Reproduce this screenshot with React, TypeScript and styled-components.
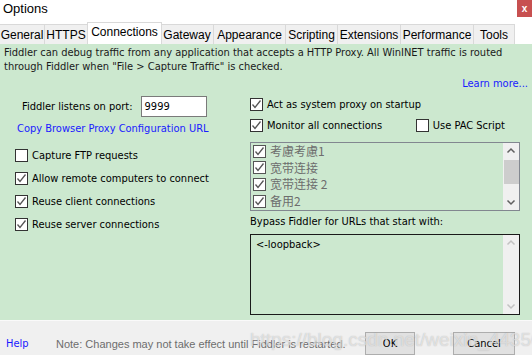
import styled, { createGlobalStyle } from 'styled-components'

const GlobalStyle = createGlobalStyle`
  html, body {
    margin: 0;
    padding: 0;
    background: #ffffff;
  }
  body {
    font-family: 'DejaVu Sans Condensed', 'Liberation Sans', sans-serif;
    font-size: 11px;
    color: #000;
  }
`

const GREEN = '#cce8cf'

const Window = styled.div`
  position: relative;
  width: 532px;
  height: 355px;
  display: flex;
  flex-direction: column;
  overflow: hidden;
`

const TitleBar = styled.div`
  height: 22px;
  display: flex;
  justify-content: space-between;
  align-items: flex-start;
  background: #ffffff;
`

const Title = styled.span`
  font-family: 'Liberation Sans', sans-serif;
  font-size: 13px;
  padding: 1px 0 0 3px;
`

const CloseButton = styled.div`
  width: 15px;
  height: 17px;
  background: #c75050;
  color: #fff;
  font-family: 'Liberation Sans', sans-serif;
  font-weight: bold;
  font-size: 10px;
  display: flex;
  align-items: center;
  justify-content: center;
`

const TabStrip = styled.div`
  height: 22px;
  display: flex;
  align-items: flex-end;
  background: #ffffff;
`

const Tab = styled.div<{ active?: boolean; w: number }>`
  width: ${(p) => p.w}px;
  box-sizing: border-box;
  height: ${(p) => (p.active ? 22 : 20)}px;
  margin-left: ${(p) => (p.active ? -1 : 0)}px;
  margin-right: ${(p) => (p.active ? -1 : 0)}px;
  position: relative;
  z-index: ${(p) => (p.active ? 1 : 0)};
  background: ${(p) => (p.active ? '#ffffff' : '#f0f0f0')};
  border: 1px solid #d9d9d9;
  border-bottom: none;
  border-left: ${(p) => (p.active ? '1px solid #d9d9d9' : 'none')};
  display: flex;
  align-items: center;
  justify-content: center;
  font-family: 'Liberation Sans', sans-serif;
  font-size: 12px;
  padding-bottom: ${(p) => (p.active ? 3 : 0)}px;
`

const Content = styled.div`
  flex: 1;
  background: ${GREEN};
  display: flex;
  flex-direction: column;
  padding: 2px 4px 0 4px;
`

const Description = styled.p`
  margin: 0;
  line-height: 14px;
  color: #1a1a1a;
`

const LearnMore = styled.a`
  align-self: flex-end;
  color: #1a1aff;
  margin: 3px 0 0 0;
  line-height: 14px;
  text-decoration: none;
`

const Columns = styled.div`
  display: grid;
  grid-template-columns: 246px 270px;
  margin-top: 4px;
`

const Column = styled.div`
  display: flex;
  flex-direction: column;
`

const PortRow = styled.div`
  display: flex;
  align-items: center;
  gap: 8px;
  padding-left: 18px;
  margin-top: 1px;
`

const PortInput = styled.div`
  width: 66px;
  height: 21px;
  box-sizing: border-box;
  border: 1px solid #7a7a7a;
  background: #fff;
  padding: 3px 3px;
`

const LinkText = styled.a`
  color: #1a1aff;
  text-decoration: none;
  padding-left: 13px;
  margin-top: 5px;
  line-height: 14px;
`

const CheckRow = styled.label<{ top: number; indent?: number }>`
  display: flex;
  align-items: center;
  gap: 4px;
  height: 17px;
  margin-top: ${(p) => p.top}px;
  padding-left: ${(p) => p.indent ?? 0}px;
`

const Box = styled.span<{ muted?: boolean }>`
  width: 13px;
  height: 13px;
  box-sizing: border-box;
  border: 1px solid ${(p) => (p.muted ? '#555' : '#333')};
  background: #fff;
  display: inline-flex;
  align-items: center;
  justify-content: center;
  flex-shrink: 0;
`

const Check = ({ checked, muted }: { checked?: boolean; muted?: boolean }) => (
  <Box muted={muted}>
    {checked && (
      <svg width="11" height="11" viewBox="0 0 11 11">
        <path d="M1.5 5.5 L4 8.5 L9.5 1.5" fill="none" stroke="#555" strokeWidth="1.3" />
      </svg>
    )}
  </Box>
)

const SplitRow = styled.div`
  display: flex;
  align-items: center;
  justify-content: space-between;
  padding-right: 15px;
  margin-top: 4px;
`

const ListBox = styled.div`
  margin-top: 8px;
  height: 69px;
  box-sizing: border-box;
  border: 1px solid #828790;
  display: flex;
`

const ListItems = styled.div`
  flex: 1;
  padding: 0 0 0 2px;
  display: flex;
  flex-direction: column;
  overflow: hidden;
`

const ListItem = styled.div`
  display: flex;
  align-items: center;
  gap: 4px;
  height: 16.6px;
  line-height: 16px;
  flex-shrink: 0;
  color: #6d6d6d;
  font-family: 'Noto Sans CJK SC', 'Liberation Sans', sans-serif;
  font-size: 12px;
`

const ScrollBar = styled.div<{ dim?: boolean }>`
  width: 16px;
  background: #f0f0f0;
  display: flex;
  flex-direction: column;
  align-items: center;
  color: ${(p) => (p.dim ? '#c2c2c2' : '#606060')};
`

const Track = styled.div`
  flex: 1;
  width: 100%;
`

const Thumb = styled.div`
  width: 15px;
  height: 24px;
  margin-top: 1px;
  background: #cdcdcd;
`

const Arrow = ({ down }: { down?: boolean }) => (
  <svg width="16" height="16" viewBox="0 0 16 16" style={{ flexShrink: 0 }}>
    <path
      d={down ? 'M4.5 6.5 L8 10 L11.5 6.5' : 'M4.5 9.5 L8 6 L11.5 9.5'}
      fill="none"
      stroke="currentColor"
      strokeWidth="1.5"
    />
  </svg>
)

const BypassLabel = styled.div`
  margin-top: 4px;
  line-height: 14px;
`

const TextArea = styled.div`
  margin-top: 5px;
  height: 81px;
  box-sizing: border-box;
  border: 1px solid #1a1a1a;
  display: flex;
`

const TextAreaBody = styled.div`
  flex: 1;
  padding: 3px 5px;
`

const Footer = styled.div`
  height: 35px;
  box-sizing: border-box;
  background: #f0f0f0;
  border-top: 1px solid #fafafa;
  display: flex;
  align-items: flex-end;
  padding: 0 17px 0 6px;
`

const FooterLine = styled.div`
  display: flex;
  align-items: center;
  width: 100%;
  height: 23px;
`

const HelpLink = styled.a`
  color: #1a1aff;
  text-decoration: none;
  width: 50px;
  flex-shrink: 0;
`

const Note = styled.span`
  color: #6d6d6d;
  flex: 1;
  min-width: 0;
  white-space: nowrap;
  font-family: 'Liberation Sans', sans-serif;
`

const Button = styled.div<{ w: number }>`
  width: ${(p) => p.w}px;
  height: 23px;
  box-sizing: border-box;
  border: 1px solid #adadad;
  background: #e1e1e1;
  display: flex;
  align-items: center;
  justify-content: center;
  margin-left: 38px;
  flex-shrink: 0;
`

const Watermark = styled.div`
  position: absolute;
  left: 250px;
  top: 329px;
  font-family: 'Liberation Sans', sans-serif;
  font-size: 19px;
  color: rgba(255, 255, 255, 0.55);
  text-shadow: 0 0 1px rgba(120, 120, 120, 0.5);
  pointer-events: none;
  white-space: nowrap;
`

const tabs: [string, number][] = [
  ['General', 45],
  ['HTTPS', 43],
  ['Connections', 75],
  ['Gateway', 53],
  ['Appearance', 72],
  ['Scripting', 52],
  ['Extensions', 63],
  ['Performance', 73],
  ['Tools', 41],
]

const connections = ['考慮考慮1', '宽带连接', '宽带连接 2', '备用2']

export default function App() {
  return (
    <Window>
      <GlobalStyle />
      <TitleBar>
        <Title>Options</Title>
        <CloseButton>x</CloseButton>
      </TitleBar>
      <TabStrip>
        {tabs.map(([name, w]) => (
          <Tab key={name} w={w} active={name === 'Connections'}>
            {name}
          </Tab>
        ))}
      </TabStrip>
      <Content>
        <Description>
          Fiddler can debug traffic from any application that accepts a HTTP Proxy. All WinINET traffic is routed
          through Fiddler when "File &gt; Capture Traffic" is checked.
        </Description>
        <LearnMore>Learn more...</LearnMore>
        <Columns>
          <Column>
            <PortRow>
              Fiddler listens on port:
              <PortInput>9999</PortInput>
            </PortRow>
            <LinkText>Copy Browser Proxy Configuration URL</LinkText>
            <CheckRow top={11} indent={11}>
              <Check /> Capture FTP requests
            </CheckRow>
            <CheckRow top={6} indent={11}>
              <Check checked /> Allow remote computers to connect
            </CheckRow>
            <CheckRow top={6} indent={11}>
              <Check checked /> Reuse client connections
            </CheckRow>
            <CheckRow top={6} indent={11}>
              <Check checked /> Reuse server connections
            </CheckRow>
          </Column>
          <Column>
            <CheckRow top={1}>
              <Check checked /> Act as system proxy on startup
            </CheckRow>
            <SplitRow>
              <CheckRow top={0}>
                <Check checked /> Monitor all connections
              </CheckRow>
              <CheckRow top={0}>
                <Check /> Use PAC Script
              </CheckRow>
            </SplitRow>
            <ListBox>
              <ListItems>
                {connections.map((c) => (
                  <ListItem key={c}>
                    <Check checked muted /> {c}
                  </ListItem>
                ))}
              </ListItems>
              <ScrollBar>
                <Arrow />
                <Thumb />
                <Track />
                <Arrow down />
              </ScrollBar>
            </ListBox>
            <BypassLabel>Bypass Fiddler for URLs that start with:</BypassLabel>
            <TextArea>
              <TextAreaBody>&lt;-loopback&gt;</TextAreaBody>
              <ScrollBar dim>
                <Arrow />
                <Track />
                <Arrow down />
              </ScrollBar>
            </TextArea>
          </Column>
        </Columns>
      </Content>
      <Footer>
        <FooterLine>
          <HelpLink>Help</HelpLink>
          <Note>Note: Changes may not take effect until Fiddler is restarted.</Note>
          <Button w={50}>OK</Button>
          <Button w={62}>Cancel</Button>
        </FooterLine>
      </Footer>
      <Watermark>https://blog.csdn.net/weixin_44356031</Watermark>
    </Window>
  )
}
